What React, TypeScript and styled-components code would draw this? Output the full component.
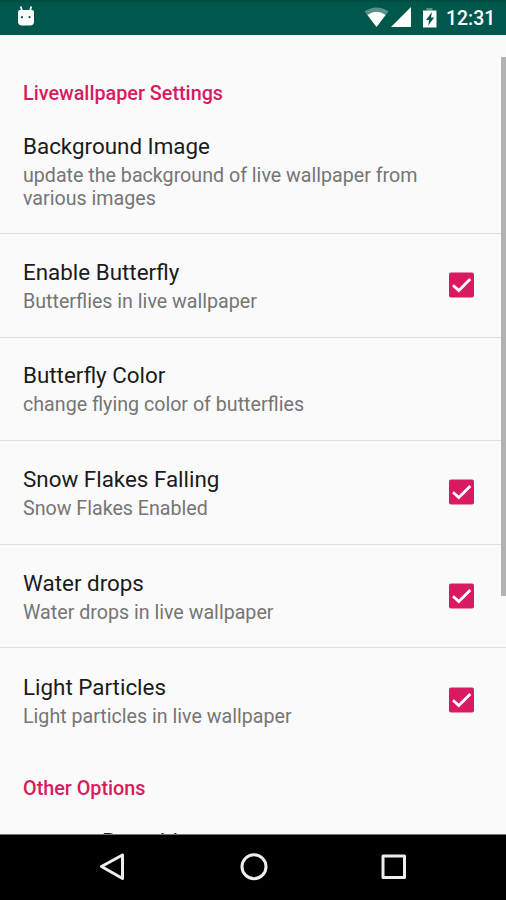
import React from "react";
import styled, { createGlobalStyle } from "styled-components";

const GlobalStyle = createGlobalStyle`
  body { margin: 0; background: #fafafa; font-family: Roboto, sans-serif; }
`;

const Screen = styled.div`
  position: relative;
  width: 506px;
  height: 900px;
  overflow: hidden;
  display: flex;
  flex-direction: column;
  background: #fafafa;
`;

const StatusBar = styled.header`
  flex: none;
  height: 35px;
  box-sizing: border-box;
  padding: 0 11px 0 17px;
  display: flex;
  align-items: center;
  background: linear-gradient(#004a3e 0, #00574b 3px);
  color: #fff;
`;

const StatusIcons = styled.div`
  margin-left: auto;
  display: flex;
  align-items: center;
`;

const Clock = styled.span`
  margin-left: 7.5px;
  width: 49px;
  padding-top: 2px;
  font-size: 19.4px;
  font-weight: 500;
  line-height: 35px;
  white-space: nowrap;
`;

const Content = styled.main`
  flex: none;
  height: 799px;
  overflow: hidden;
  border-bottom: 1px solid #777;
`;

const Category = styled.h2<{ $top: number }>`
  margin: 0;
  padding: ${(p) => p.$top}px 23px 0;
  font-size: 19.8px;
  line-height: 23px;
  font-weight: 500;
  color: #d81b60;
`;

const Row = styled.div<{ $height: number; $offset?: number; $last?: boolean }>`
  box-sizing: border-box;
  height: ${(p) => p.$height}px;
  padding: ${(p) => p.$offset ?? 0}px 31px 0 23px;
  display: flex;
  align-items: center;
  border-bottom: ${(p) => (p.$last ? "0" : "1.5px solid #dfdfdf")};
`;

const Labels = styled.div`
  flex: 1;
`;

const Title = styled.div`
  font-size: 22.4px;
  line-height: 27px;
  color: #1b1b1b;
`;

const Summary = styled.div`
  max-width: 410px;
  margin: 4px 0 -1px;
  font-size: 19.65px;
  line-height: 23px;
  color: #757575;
`;

const LinkRow = styled.div`
  padding: 28px 23px 0 102px;
`;

const ScrollThumb = styled.div`
  position: absolute;
  right: 0;
  top: 57px;
  width: 5px;
  height: 539px;
  background: #b2b2b2;
`;

const NavBar = styled.nav`
  flex: none;
  height: 65px;
  display: flex;
  align-items: flex-start;
  justify-content: center;
  gap: 108.5px;
  padding: 16px 0 0 1px;
  box-sizing: border-box;
  background: #000;
`;

const Checkbox = () => (
  <svg width="26" height="26" viewBox="0 0 26 26">
    <rect x="0" y="0.5" width="25" height="25" rx="2" fill="#d81b60" />
    <path d="M4 13.2l5.8 5.3L21.3 7" fill="none" stroke="#fff" strokeWidth="2.8" />
  </svg>
);

const Android = () => (
  <svg width="18" height="35" viewBox="0 0 18 35">
    <path d="M3.8 6.5l1 4M14.2 6.5l-1 4" stroke="#fff" strokeWidth="1.8" />
    <path d="M1 12a2 2 0 0 1 2-2h12a2 2 0 0 1 2 2v9.5a4 4 0 0 1-4 4H5a4 4 0 0 1-4-4z" fill="#fff" />
    <circle cx="5" cy="17.2" r="1.1" fill="#00574b" />
    <circle cx="12.5" cy="17.2" r="1.1" fill="#00574b" />
  </svg>
);

const Signals = () => (
  <svg width="75" height="35" viewBox="0 0 75 35">
    <path d="M0.5 11.5Q12.5 3.5 24.5 11.5L12.5 27z" fill="#fff" opacity="0.35" />
    <path d="M3.5 15Q12.5 8.5 21.5 15L12.5 27z" fill="#fff" />
    <path d="M27 27L47 7v20z" fill="#fff" />
    <path d="M62.5 8h6v2.5h-6z" fill="#fff" opacity="0.35" />
    <path d="M59 10.5h13.5v17H59z" fill="#fff" />
    <path d="M68 12l-6 8h3.2l-1 5.5 6-8H67z" fill="#00574b" />
  </svg>
);

const NavIcon = ({ children }: { children: React.ReactNode }) => (
  <svg width="32" height="32" viewBox="0 0 32 32" fill="none" stroke="#eee" strokeWidth="3" strokeLinejoin="round">
    {children}
  </svg>
);

type Setting = { title: string; summary: string; checked?: boolean };

const settings: Setting[] = [
  { title: "Enable Butterfly", summary: "Butterflies in live wallpaper", checked: true },
  { title: "Butterfly Color", summary: "change flying color of butterflies" },
  { title: "Snow Flakes Falling", summary: "Snow Flakes Enabled", checked: true },
  { title: "Water drops", summary: "Water drops in live wallpaper", checked: true },
  { title: "Light Particles", summary: "Light particles in live wallpaper", checked: true },
];

export default function App() {
  return (
    <Screen>
      <GlobalStyle />
      <StatusBar>
        <Android />
        <StatusIcons>
          <Signals />
          <Clock>12:31</Clock>
        </StatusIcons>
      </StatusBar>
      <Content>
        <Category $top={47}>Livewallpaper Settings</Category>
        <Row $height={129} $offset={3}>
          <Labels>
            <Title>Background Image</Title>
            <Summary>update the background of live wallpaper from various images</Summary>
          </Labels>
        </Row>
        {settings.map((item, i) => (
          <Row key={item.title} $height={103.6} $last={i === settings.length - 1}>
            <Labels>
              <Title>{item.title}</Title>
              <Summary>{item.summary}</Summary>
            </Labels>
            {item.checked && <Checkbox />}
          </Row>
        ))}
        <Category $top={25}>Other Options</Category>
        <LinkRow>
          <Title>Rate this</Title>
        </LinkRow>
      </Content>
      <ScrollThumb />
      <NavBar>
        <NavIcon>
          <path d="M4.5 15.5L25.5 4v23.5z" />
        </NavIcon>
        <NavIcon>
          <circle cx="16" cy="15.7" r="12" />
        </NavIcon>
        <NavIcon>
          <path d="M5 5h21.5v21.5h-21.5z" />
        </NavIcon>
      </NavBar>
    </Screen>
  );
}
